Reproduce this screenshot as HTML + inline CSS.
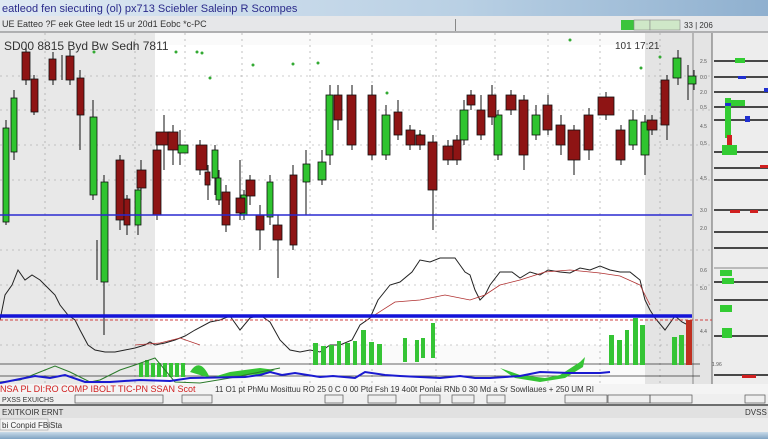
<!DOCTYPE html>
<html><head><meta charset="utf-8"><style>
html,body{margin:0;padding:0;width:768px;height:439px;overflow:hidden;background:#e9eaec;font-family:"Liberation Sans",sans-serif}
</style></head><body>
<svg width="768" height="439" viewBox="0 0 768 439" xmlns="http://www.w3.org/2000/svg" font-family="Liberation Sans, sans-serif">
<defs>
<linearGradient id="tb" x1="0" x2="1"><stop offset="0" stop-color="#dfe9f3"/><stop offset="0.6" stop-color="#b9d0e4"/><stop offset="1" stop-color="#8fb0cf"/></linearGradient>
<linearGradient id="bb" x1="0" y1="0" x2="0" y2="1"><stop offset="0" stop-color="#c9dbe9"/><stop offset="1" stop-color="#7fa3c3"/></linearGradient>
</defs>
<rect x="0" y="0" width="768" height="16" fill="url(#tb)"/>
<text x="2" y="12" font-size="11" fill="#2a2a8a">eatleod fen siecuting (ol) px713 Sciebler Saleinp R  Scompes</text>
<rect x="0" y="16" width="768" height="16" fill="#e6e7e9"/>
<g font-size="9" fill="#333">
<text x="2" y="27">UE Eatteo ?F eek Gtee ledt 15 ur 20d1 Eobc *c-PC</text>
</g>
<rect x="455" y="19" width="1" height="12" fill="#888"/>
<rect x="621" y="20" width="13" height="10" fill="#3cc43c"/>
<rect x="634" y="20" width="16" height="10" fill="#cfe8c8" stroke="#888" stroke-width=".6"/>
<rect x="650" y="20" width="30" height="10" fill="#cfe8c8" stroke="#888" stroke-width=".6"/>
<text x="684" y="28" font-size="8" fill="#333">33 | 206</text>
<line x1="0" y1="32" x2="768" y2="32" stroke="#777"/>
<!-- chart bg -->
<rect x="0" y="33" width="712" height="352" fill="#fafafa"/>
<rect x="0" y="33" width="155" height="352" fill="#e8e8e8"/>
<rect x="155" y="45" width="490" height="300" fill="#ffffff"/>
<rect x="645" y="33" width="67" height="352" fill="#e4e4e4"/>
<rect x="712" y="33" width="56" height="352" fill="#ededed"/>
<!-- grid -->
<g stroke="#999" stroke-width=".6" stroke-dasharray="2,4">
<line x1="0" y1="76" x2="712" y2="76"/><line x1="0" y1="110" x2="712" y2="110"/><line x1="0" y1="145" x2="712" y2="145"/><line x1="0" y1="180" x2="712" y2="180"/><line x1="0" y1="250" x2="712" y2="250"/><line x1="0" y1="285" x2="712" y2="285"/><line x1="0" y1="345" x2="712" y2="345"/>
<line x1="45" y1="33" x2="45" y2="385"/><line x1="135" y1="33" x2="135" y2="385"/><line x1="185" y1="33" x2="185" y2="385"/><line x1="242" y1="33" x2="242" y2="385"/><line x1="310" y1="33" x2="310" y2="385"/><line x1="372" y1="33" x2="372" y2="385"/><line x1="436" y1="33" x2="436" y2="385"/><line x1="495" y1="33" x2="495" y2="385"/><line x1="548" y1="33" x2="548" y2="385"/><line x1="600" y1="33" x2="600" y2="385"/><line x1="660" y1="33" x2="660" y2="385"/>
</g>
<line x1="693" y1="33" x2="693" y2="385" stroke="#888"/>
<line x1="712" y1="33" x2="712" y2="385" stroke="#666"/>
<text x="4" y="50" font-size="12" fill="#333">SD00 8815 Byd Bw Sedh 7811</text>
<text x="615" y="49" font-size="10" fill="#333">101 17:21</text>
<!-- scattered dots -->
<g fill="#3a3">
<circle cx="94" cy="52" r="1.5"/><circle cx="176" cy="52" r="1.5"/><circle cx="197" cy="52" r="1.5"/><circle cx="202" cy="53" r="1.5"/><circle cx="253" cy="65" r="1.5"/><circle cx="293" cy="64" r="1.5"/><circle cx="318" cy="63" r="1.5"/><circle cx="387" cy="93" r="1.5"/><circle cx="547" cy="128" r="1.5"/><circle cx="420" cy="135" r="1.5"/><circle cx="660" cy="57" r="1.5"/><circle cx="641" cy="68" r="1.5"/><circle cx="570" cy="40" r="1.5"/><circle cx="210" cy="78" r="1.5"/>
</g>
<!-- candles -->
<g stroke="#111" stroke-width="1">
<line x1="6" y1="120" x2="6" y2="225"/><line x1="14" y1="90" x2="14" y2="160"/><line x1="26" y1="48" x2="26" y2="85"/><line x1="34" y1="75" x2="34" y2="115"/><line x1="53" y1="52" x2="53" y2="85"/><line x1="62" y1="55" x2="62" y2="80"/><line x1="70" y1="50" x2="70" y2="85"/><line x1="80" y1="70" x2="80" y2="150"/><line x1="93" y1="100" x2="93" y2="200"/><line x1="104" y1="175" x2="104" y2="335"/><line x1="97" y1="240" x2="97" y2="280"/><line x1="120" y1="155" x2="120" y2="230"/><line x1="127" y1="195" x2="127" y2="235"/><line x1="138" y1="185" x2="138" y2="235"/><line x1="141" y1="160" x2="141" y2="200"/><line x1="157" y1="145" x2="157" y2="220"/><line x1="164" y1="115" x2="164" y2="170"/><line x1="173" y1="125" x2="173" y2="165"/><line x1="180" y1="130" x2="180" y2="165"/><line x1="200" y1="140" x2="200" y2="175"/><line x1="208" y1="165" x2="208" y2="200"/><line x1="215" y1="145" x2="215" y2="195"/><line x1="219" y1="170" x2="219" y2="205"/><line x1="226" y1="185" x2="226" y2="232"/><line x1="240" y1="160" x2="240" y2="220"/><line x1="244" y1="190" x2="244" y2="220"/><line x1="250" y1="175" x2="250" y2="205"/><line x1="260" y1="205" x2="260" y2="250"/><line x1="270" y1="175" x2="270" y2="225"/><line x1="278" y1="215" x2="278" y2="278"/><line x1="293" y1="165" x2="293" y2="250"/><line x1="306" y1="150" x2="306" y2="215"/><line x1="322" y1="150" x2="322" y2="185"/><line x1="330" y1="85" x2="330" y2="165"/><line x1="338" y1="85" x2="338" y2="130"/><line x1="352" y1="85" x2="352" y2="150"/><line x1="372" y1="85" x2="372" y2="160"/><line x1="386" y1="105" x2="386" y2="160"/><line x1="398" y1="100" x2="398" y2="140"/><line x1="410" y1="125" x2="410" y2="150"/><line x1="420" y1="130" x2="420" y2="150"/><line x1="433" y1="135" x2="433" y2="230"/><line x1="448" y1="140" x2="448" y2="165"/><line x1="457" y1="135" x2="457" y2="165"/><line x1="464" y1="100" x2="464" y2="145"/><line x1="471" y1="90" x2="471" y2="110"/><line x1="481" y1="95" x2="481" y2="140"/><line x1="492" y1="85" x2="492" y2="125"/><line x1="498" y1="110" x2="498" y2="160"/><line x1="511" y1="90" x2="511" y2="115"/><line x1="524" y1="95" x2="524" y2="170"/><line x1="536" y1="105" x2="536" y2="140"/><line x1="548" y1="95" x2="548" y2="135"/><line x1="561" y1="115" x2="561" y2="155"/><line x1="574" y1="125" x2="574" y2="175"/><line x1="589" y1="108" x2="589" y2="160"/><line x1="606" y1="92" x2="606" y2="120"/><line x1="621" y1="125" x2="621" y2="165"/><line x1="633" y1="110" x2="633" y2="150"/><line x1="645" y1="115" x2="645" y2="175"/><line x1="652" y1="115" x2="652" y2="135"/><line x1="667" y1="75" x2="667" y2="140"/><line x1="678" y1="50" x2="678" y2="85"/><line x1="688" y1="65" x2="688" y2="100"/><line x1="694" y1="70" x2="694" y2="90"/>
</g>
<g stroke="#111" stroke-width=".8">
<g fill="#2fc42f">
<rect x="3" y="128" width="6" height="94"/><rect x="11" y="98" width="6" height="54"/><rect x="90" y="117" width="7" height="78"/><rect x="101" y="182" width="7" height="100"/><rect x="135" y="190" width="6" height="35"/><rect x="178" y="145" width="10" height="8"/><rect x="212" y="150" width="6" height="28"/><rect x="216" y="178" width="5" height="22"/><rect x="241" y="195" width="6" height="20"/><rect x="267" y="182" width="6" height="35"/><rect x="303" y="164" width="7" height="18"/><rect x="318" y="162" width="8" height="18"/><rect x="326" y="95" width="7" height="60"/><rect x="382" y="115" width="8" height="40"/><rect x="460" y="110" width="8" height="30"/><rect x="494" y="115" width="8" height="40"/><rect x="532" y="115" width="8" height="20"/><rect x="629" y="120" width="8" height="25"/><rect x="641" y="122" width="8" height="33"/><rect x="673" y="58" width="8" height="20"/><rect x="688" y="76" width="8" height="8"/>
</g>
<g fill="#8e1414">
<rect x="22" y="52" width="8" height="28"/><rect x="31" y="79" width="7" height="33"/><rect x="49" y="59" width="7" height="21"/><rect x="66" y="56" width="8" height="24"/><rect x="77" y="78" width="7" height="37"/><rect x="116" y="160" width="8" height="60"/><rect x="124" y="199" width="6" height="26"/><rect x="137" y="170" width="9" height="18"/><rect x="153" y="150" width="8" height="65"/><rect x="156" y="132" width="14" height="13"/><rect x="168" y="132" width="10" height="18"/><rect x="196" y="145" width="11" height="25"/><rect x="205" y="172" width="5" height="13"/><rect x="222" y="192" width="8" height="33"/><rect x="236" y="198" width="9" height="15"/><rect x="246" y="180" width="9" height="16"/><rect x="256" y="215" width="8" height="15"/><rect x="273" y="225" width="9" height="15"/><rect x="290" y="175" width="7" height="70"/><rect x="334" y="95" width="8" height="25"/><rect x="347" y="95" width="9" height="50"/><rect x="368" y="95" width="8" height="60"/><rect x="394" y="112" width="8" height="23"/><rect x="406" y="130" width="9" height="15"/><rect x="416" y="135" width="9" height="10"/><rect x="428" y="142" width="9" height="48"/><rect x="443" y="146" width="10" height="14"/><rect x="453" y="140" width="8" height="20"/><rect x="467" y="95" width="8" height="10"/><rect x="477" y="110" width="8" height="25"/><rect x="488" y="95" width="8" height="22"/><rect x="506" y="95" width="10" height="15"/><rect x="519" y="100" width="9" height="55"/><rect x="543" y="105" width="9" height="25"/><rect x="556" y="125" width="9" height="20"/><rect x="568" y="130" width="12" height="30"/><rect x="584" y="115" width="9" height="35"/><rect x="598" y="97" width="16" height="18"/><rect x="616" y="130" width="9" height="30"/><rect x="647" y="120" width="10" height="10"/><rect x="661" y="80" width="8" height="45"/>
</g>
</g>
<!-- blue line 215 -->
<line x1="0" y1="215" x2="692" y2="215" stroke="#2a2ad0" stroke-width="1.5"/>
<!-- price line lower -->
<polyline fill="none" stroke="#222" stroke-width="1" points="0,320 5,295 12,285 18,270 25,280 32,275 40,280 45,285 50,290 55,295 60,305 68,315 75,320 80,330 88,345 95,350 105,352 115,352 125,350 135,348 145,345 150,342 155,345 165,343 175,340 185,336 195,330 210,322 220,320 230,316 240,330 250,318 260,315 270,322 280,340 290,350 300,352 310,350 320,352 330,345 340,345 352,340 360,325 370,318 378,300 390,285 400,282 412,272 420,260 430,262 440,258 447,258 455,258 460,265 465,272 470,275 475,290 480,300 485,295 490,285 500,272 512,272 520,278 530,272 540,275 548,270 560,272 570,273 580,268 590,270 600,266 610,270 620,272 630,272 640,280 645,300 650,310 655,318 665,330 675,316 682,322 690,326"/>
<polyline fill="none" stroke="#b03030" stroke-width=".8" points="370,318 395,302 420,300 445,295 470,300 485,295 500,285 520,280 545,272 570,270 600,273 620,276 640,285 650,305"/>
<polyline fill="none" stroke="#b03030" stroke-width=".8" points="135,345 160,343 180,338 200,345"/>
<!-- thick blue & red -->
<line x1="0" y1="316" x2="692" y2="316" stroke="#1414d8" stroke-width="3.5"/>
<line x1="0" y1="320" x2="712" y2="320" stroke="#d04040" stroke-width="1" stroke-dasharray="3,2"/>
<!-- indicator lines -->
<line x1="0" y1="364" x2="700" y2="364" stroke="#333" stroke-width=".8"/>
<line x1="0" y1="376" x2="700" y2="376" stroke="#333" stroke-width=".8"/>
<!-- green volume bars -->
<g fill="#35c435">
<rect x="139" y="363" width="4" height="14"/><rect x="145" y="360" width="4" height="17"/><rect x="151" y="363" width="4" height="14"/><rect x="157" y="363" width="4" height="14"/><rect x="163" y="363" width="4" height="14"/><rect x="169" y="363" width="4" height="14"/><rect x="175" y="363" width="4" height="14"/><rect x="181" y="363" width="4" height="14"/>
<rect x="313" y="343" width="5" height="22"/><rect x="321" y="346" width="5" height="19"/><rect x="329" y="345" width="5" height="20"/><rect x="337" y="341" width="4" height="24"/><rect x="345" y="343" width="5" height="22"/><rect x="353" y="341" width="4" height="24"/><rect x="361" y="330" width="5" height="35"/><rect x="369" y="342" width="5" height="23"/><rect x="377" y="344" width="5" height="21"/>
<rect x="403" y="338" width="4" height="24"/><rect x="415" y="340" width="4" height="22"/><rect x="421" y="338" width="4" height="20"/><rect x="431" y="323" width="4" height="35"/>
<rect x="609" y="335" width="5" height="30"/><rect x="617" y="340" width="5" height="25"/><rect x="625" y="330" width="4" height="35"/><rect x="633" y="318" width="5" height="47"/><rect x="640" y="325" width="5" height="40"/>
<rect x="672" y="337" width="5" height="28"/><rect x="679" y="335" width="5" height="30"/>
</g>
<rect x="686" y="320" width="6" height="45" fill="#c03020"/>
<!-- green filled oscillator -->
<path d="M190,372 Q200,356 210,378 L230,372 L260,368 L275,370 L285,366 L265,374 L230,376 L210,378 Z" fill="#35c435"/>
<path d="M500,368 L520,375 L545,378 L560,375 L580,362 L585,357 L583,367 L565,378 L540,382 L515,378 Z" fill="#35c435"/>
<polyline fill="none" stroke="#2a7a2a" stroke-width="1" points="0,382 20,380 40,372 55,366 70,372 90,382 100,380 120,370 135,365 155,358 175,382 200,383 230,378 260,372 280,368"/>
<!-- blue lower line -->
<polyline fill="none" stroke="#1a1ad0" stroke-width="2" points="0,383 20,379 35,376 50,378 65,375 85,382 110,382 140,380 170,381 190,378 245,377 260,375 270,372 282,375 295,373 320,377 333,376 355,378 365,372 385,375 400,376 420,377 440,378 460,376 475,378 490,378 520,376 540,372 570,373 600,373 610,372"/>
<!-- right panel -->
<g stroke="#111" stroke-width="1.5">
<line x1="714" y1="61" x2="768" y2="61"/><line x1="714" y1="77" x2="768" y2="77"/><line x1="714" y1="92" x2="768" y2="92"/><line x1="714" y1="107" x2="768" y2="107"/><line x1="714" y1="120" x2="768" y2="120"/><line x1="714" y1="152" x2="768" y2="152"/><line x1="714" y1="168" x2="768" y2="168"/><line x1="714" y1="180" x2="768" y2="180"/><line x1="714" y1="210" x2="768" y2="210"/><line x1="714" y1="232" x2="768" y2="232"/><line x1="714" y1="248" x2="768" y2="248"/><line x1="714" y1="282" x2="768" y2="282"/><line x1="714" y1="300" x2="768" y2="300"/><line x1="714" y1="336" x2="768" y2="336"/><line x1="714" y1="375" x2="768" y2="375"/>
</g>
<line x1="714" y1="268" x2="768" y2="268" stroke="#888"/>
<g fill="#3c3">
<rect x="735" y="58" width="10" height="5"/><rect x="725" y="98" width="6" height="40"/><rect x="730" y="100" width="15" height="6"/><rect x="722" y="145" width="15" height="10"/><rect x="720" y="270" width="12" height="6"/><rect x="722" y="278" width="12" height="6"/><rect x="720" y="305" width="12" height="7"/><rect x="722" y="328" width="10" height="10"/><rect x="745" y="5" width="0" height="0"/>
</g>
<g fill="#d02020"><rect x="727" y="135" width="5" height="10"/><rect x="730" y="210" width="10" height="3"/><rect x="750" y="210" width="8" height="3"/><rect x="742" y="375" width="14" height="3"/><rect x="760" y="165" width="8" height="3"/></g>
<g fill="#2030d0"><rect x="738" y="76" width="8" height="3"/><rect x="725" y="103" width="6" height="3"/><rect x="745" y="116" width="5" height="6"/><rect x="764" y="88" width="4" height="4"/></g>
<g font-size="5" fill="#555"><text x="700" y="63">2.5</text><text x="700" y="79">0.0</text><text x="700" y="94">2.0</text><text x="700" y="109">0.5</text><text x="700" y="128">4.5</text><text x="700" y="145">0.5</text><text x="700" y="180">4.5</text><text x="700" y="212">3.0</text><text x="700" y="230">2.0</text><text x="700" y="272">0.6</text><text x="700" y="290">5.0</text><text x="700" y="333">4.4</text><text x="712" y="366">1.96</text></g>
<!-- bottom labels -->
<rect x="0" y="384" width="768" height="10" fill="#f4f4f4"/>
<text x="0" y="392" font-size="9" fill="#d02020">NSA PL DI:RO COMP IBOLT TIC-PN SSAN Scot</text>
<text x="215" y="392" font-size="8" fill="#333">11 O1 pt   PhMu  Mosittuu RO 25   0 C 0 00    Ptd Fsh  19 4o0t   Ponlai   RNb 0 30    Md a Sr   Sowllaues  + 250 UM  RI</text>
<rect x="0" y="394" width="768" height="10" fill="#efefef"/>
<g fill="none" stroke="#555" stroke-width=".7"><rect x="75" y="395" width="88" height="8"/><rect x="182" y="395" width="30" height="8"/><rect x="325" y="395" width="18" height="8"/><rect x="368" y="395" width="28" height="8"/><rect x="420" y="395" width="20" height="8"/><rect x="452" y="395" width="22" height="8"/><rect x="487" y="395" width="18" height="8"/><rect x="565" y="395" width="42" height="8"/><rect x="608" y="395" width="42" height="8"/><rect x="650" y="395" width="42" height="8"/><rect x="745" y="395" width="20" height="8"/></g>
<text x="2" y="402" font-size="7" fill="#333">PXSS EXUICHS</text>
<line x1="0" y1="405" x2="768" y2="405" stroke="#444" stroke-width="1.5"/>
<rect x="0" y="406" width="768" height="12" fill="#e1e1e1"/>
<text x="2" y="415" font-size="8" fill="#333">EXITKOIR  ERNT</text>
<text x="745" y="415" font-size="8" fill="#333">DVSS</text>
<rect x="0" y="418" width="768" height="14" fill="#ececec"/>
<rect x="0" y="419" width="48" height="11" fill="#f6f6f6" stroke="#999" stroke-width=".6"/>
<text x="2" y="428" font-size="8" fill="#333">bi Conpid FBiSta</text>
<rect x="0" y="432" width="768" height="7" fill="url(#bb)"/>
</svg>
</body></html>
